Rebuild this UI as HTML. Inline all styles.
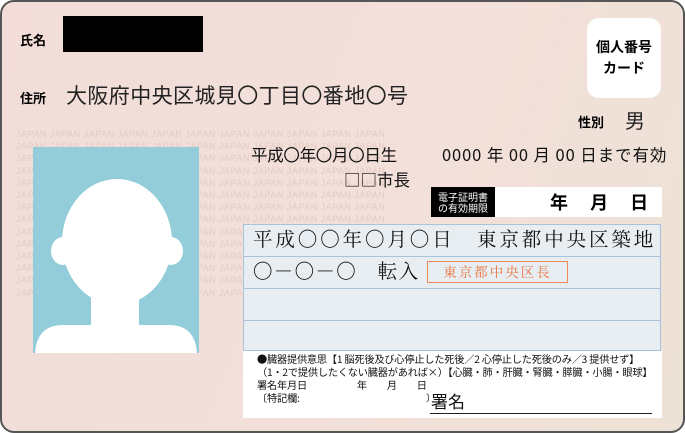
<!DOCTYPE html>
<html><head><meta charset="utf-8"><style>
*{margin:0;padding:0;box-sizing:border-box}
body{width:685px;height:433px;background:#fff;overflow:hidden;font-family:"Noto Sans CJK JP",sans-serif}
.card{position:absolute;left:0;top:0;width:685px;height:433px;border:2px solid #555;border-radius:14px;background:linear-gradient(110deg,#f2ddd8 0%,#f3e0da 55%,#ede2d6 100%);overflow:hidden}
.a{position:absolute;white-space:nowrap;line-height:1.2}
.b{font-weight:bold}
.jp{position:absolute;left:14px;top:126px;width:396px;font-family:"Liberation Sans",sans-serif;font-size:9px;line-height:12.2px;color:#e2cbc3;letter-spacing:.5px;overflow:hidden;height:170px;white-space:pre}
.serif{font-family:"Noto Serif CJK SC",serif}
.tbl{position:absolute;left:241px;top:222px;width:418px;height:127px;background:#e8edf1;border:1px solid #a9c2de}
.tbl div{height:32px;border-bottom:1px solid #a9c2de}
</style></head><body><div class="card">
<div class="jp">JAPAN JAPAN JAPAN JAPAN JAPAN JAPAN JAPAN JAPAN JAPAN JAPAN JAPAN
JAPAN JAPAN JAPAN JAPAN JAPAN JAPAN JAPAN JAPAN JAPAN JAPAN JAPAN
JAPAN JAPAN JAPAN JAPAN JAPAN JAPAN JAPAN JAPAN JAPAN JAPAN JAPAN
JAPAN JAPAN JAPAN JAPAN JAPAN JAPAN JAPAN JAPAN JAPAN JAPAN JAPAN
JAPAN JAPAN JAPAN JAPAN JAPAN JAPAN JAPAN JAPAN JAPAN JAPAN JAPAN
JAPAN JAPAN JAPAN JAPAN JAPAN JAPAN JAPAN JAPAN JAPAN JAPAN JAPAN
JAPAN JAPAN JAPAN JAPAN JAPAN JAPAN JAPAN JAPAN JAPAN JAPAN JAPAN
JAPAN JAPAN JAPAN JAPAN JAPAN JAPAN JAPAN JAPAN JAPAN JAPAN JAPAN
JAPAN JAPAN JAPAN JAPAN JAPAN JAPAN JAPAN JAPAN JAPAN JAPAN JAPAN
JAPAN JAPAN JAPAN JAPAN JAPAN JAPAN JAPAN JAPAN JAPAN JAPAN JAPAN
JAPAN JAPAN JAPAN JAPAN JAPAN JAPAN JAPAN JAPAN JAPAN JAPAN JAPAN
JAPAN JAPAN JAPAN JAPAN JAPAN JAPAN JAPAN JAPAN JAPAN JAPAN JAPAN
JAPAN JAPAN JAPAN JAPAN JAPAN JAPAN JAPAN JAPAN JAPAN JAPAN JAPAN
JAPAN JAPAN JAPAN JAPAN JAPAN JAPAN JAPAN JAPAN JAPAN JAPAN JAPAN</div>
<div class="a b" style="left:18px;top:30px;font-size:13px">氏名</div>
<div class="a" style="left:61px;top:14px;width:140px;height:36px;background:#000"></div>
<div class="a b" style="left:585px;top:16px;width:74px;height:80px;background:#fff;border-radius:12px;font-size:14px;line-height:21px;text-align:center;padding-top:19px">個人番号<br>カード</div>
<div class="a b" style="left:18px;top:88px;font-size:13px">住所</div>
<div class="a" style="left:64px;top:81px;font-size:21px;color:#222;letter-spacing:.4px">大阪府中央区城見〇丁目〇番地〇号</div>
<div class="a b" style="left:576px;top:112px;font-size:13px">性別</div>
<div class="a" style="left:623px;top:106px;font-size:20px;color:#222">男</div>
<svg class="a" style="left:31px;top:145px" width="166" height="206" viewBox="0 0 166 206">
<rect width="166" height="206" fill="#92cdd9"/>
<ellipse cx="84" cy="95" rx="55" ry="63" fill="#fff"/>
<ellipse cx="30" cy="104" rx="12" ry="14" fill="#fff"/>
<ellipse cx="138" cy="104" rx="12" ry="14" fill="#fff"/>
<rect x="58" y="140" width="48" height="50" fill="#fff"/>
<path d="M2 206 Q4 178 30 178 L136 178 Q162 178 164 206 Z" fill="#fff"/>
</svg>
<div class="a" style="left:249px;top:143px;font-size:16.5px;color:#111;letter-spacing:-.3px">平成〇年〇月〇日生</div>
<div class="a" style="left:440px;top:143px;font-size:16.5px;color:#111;letter-spacing:.9px">0000 年 00 月 00 日まで有効</div>
<div class="a" style="left:342px;top:168px;font-size:16.5px;color:#111">□□市長</div>
<div class="a" style="left:429px;top:185px;width:64px;height:30px;background:#000;color:#fff;font-size:10px;line-height:11px;text-align:center;padding-top:4px">電子証明書<br>の有効期限</div>
<div class="a b" style="left:493px;top:185px;width:167px;height:30px;background:#fff;font-size:18px;line-height:30px;padding-left:55px">年　 月　 日</div>
<div class="tbl"><div></div><div></div><div></div><div style="border:0"></div></div>
<div class="a serif" style="left:251px;top:225px;font-size:19.5px;color:#111;letter-spacing:2.9px">平成〇〇年〇月〇日　東京都中央区築地</div>
<div class="a serif" style="left:251px;top:257px;font-size:19.5px;color:#111;letter-spacing:1.3px">〇－〇－〇　転入</div>
<div class="a serif" style="left:425px;top:259px;width:141px;height:22px;border:1.5px solid #ec8a5a;color:#e8743e;font-size:13.5px;line-height:19px;text-align:center;letter-spacing:2px">東京都中央区長</div>
<div class="a" style="left:241px;top:349px;width:419px;height:67px;background:#fff"></div>
<div class="a" style="left:255px;top:350px;font-size:10.2px;line-height:13px;color:#111;letter-spacing:-.2px">●臓器提供意思【1 脳死後及び心停止した死後／2 心停止した死後のみ／3 提供せず】<br>（1・2で提供したくない臓器があれば×）【心臓・肺・肝臓・腎臓・膵臓・小腸・眼球】<br>署名年月日　　　　　年　　月　　日<br>〔特記欄:</div>
<div class="a" style="left:424px;top:391px;font-size:9px">〕</div>
<div class="a" style="left:429px;top:389px;font-size:17px;color:#111">署名</div>
<div class="a" style="left:428px;top:411px;width:222px;height:1px;background:#222"></div>
</div></body></html>
